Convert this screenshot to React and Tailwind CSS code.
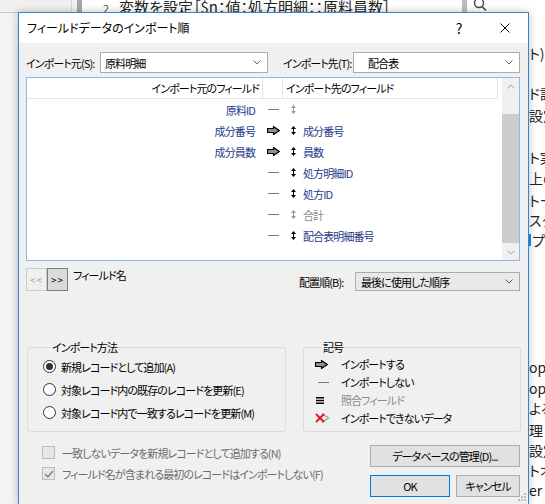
import React from "react";

// --- DATA ---
const fieldRows = [
  { src: "原料ID", mark: "dash", dim: true, dst: "" },
  { src: "成分番号", mark: "arrow", dim: false, dst: "成分番号" },
  { src: "成分員数", mark: "arrow", dim: false, dst: "員数" },
  { src: "", mark: "dash", dim: false, dst: "処方明細ID" },
  { src: "", mark: "dash", dim: false, dst: "処方ID" },
  { src: "", mark: "dash", dim: true, dst: "合計" },
  { src: "", mark: "dash", dim: false, dst: "配合表明細番号" },
];

const rightFragments = [
  { top: 45, text: "ト)" },
  { top: 85, text: "ド設" },
  { top: 107, text: "設定" },
  { top: 149, text: "ト実" },
  { top: 170, text: "上の" },
  { top: 192, text: "トー" },
  { top: 212, text: "スク" },
  { top: 232, text: "プト", mark: true },
  { top: 359, text: "op", hl: true },
  { top: 380, text: "op" },
  { top: 400, text: "よる" },
  { top: 422, text: "理" },
  { top: 442, text: "設定" },
  { top: 462, text: "トオ" },
  { top: 482, text: "er ス" },
];

// --- ICONS ---
const Chevron = ({ color = "#606060" }) => (
  <svg width="8" height="5" viewBox="0 0 8 5">
    <path d="M0.5 0.5L4 4L7.5 0.5" fill="none" stroke={color} strokeWidth="1" />
  </svg>
);

const ChevronUp = ({ color = "#a3a3a3" }) => (
  <svg width="8" height="5" viewBox="0 0 8 5">
    <path d="M0.5 4.5L4 1L7.5 4.5" fill="none" stroke={color} strokeWidth="1" />
  </svg>
);

const ImportArrow = () => (
  <svg width="13" height="9" viewBox="0 0 13 9">
    <path d="M0.5 2.5H6.5V0.5L12.2 4.5L6.5 8.5V6.5H0.5Z" fill="#8f8f8f" stroke="#000" strokeWidth="1.2" strokeLinejoin="miter" />
  </svg>
);

const UpDown = ({ color }) => (
  <svg width="5" height="9" viewBox="0 0 5 9">
    <path d="M2.5 0L5 3H0Z M2 3H3V6H2Z M0 6H5L2.5 9Z" fill={color} />
  </svg>
);

const Dash = () => <div className="w-[11px] h-px bg-[#7a7a7a]" />;

const MatchIcon = () => (
  <svg width="8" height="7" viewBox="0 0 8 7">
    <path d="M0 0.75H8M0 3.5H8M0 6.25H8" stroke="#000" strokeWidth="1.3" />
  </svg>
);

const CannotIcon = () => (
  <svg width="15" height="10" viewBox="0 0 15 10">
    <path d="M7 0.5L13.5 5L7 9.5" fill="none" stroke="#9a9a9a" strokeWidth="1.2" />
    <path d="M1 1L9 9M9 1L1 9" stroke="#e81123" strokeWidth="1.8" />
  </svg>
);

const Radio = ({ checked }) => (
  <div className="w-[13px] h-[13px] shrink-0 rounded-full border border-[#333] bg-white flex items-center justify-center">
    {checked && <div className="w-[7px] h-[7px] rounded-full bg-[#333]" />}
  </div>
);

const Checkbox = ({ checked }) => (
  <div className="w-[13px] h-[13px] shrink-0 border border-[#bcbcbc] bg-[#e6e6e6] flex items-center justify-center">
    {checked && (
      <svg width="10" height="8" viewBox="0 0 10 8">
        <path d="M1 4L3.8 6.8L9 1" fill="none" stroke="#8a8a8a" strokeWidth="1.6" />
      </svg>
    )}
  </div>
);

const Combo = ({ text, width, textPad, bg }) => (
  <div className={`flex items-center justify-between border border-[#acacac] h-full ${bg} ${width}`}>
    <span className={`${textPad} whitespace-nowrap text-black`}>{text}</span>
    <span className="pr-[6px] flex items-center"><Chevron /></span>
  </div>
);

export default function App() {
  return (
    <div className="relative w-[545px] h-[504px] overflow-hidden bg-white font-['Noto_Sans_CJK_JP','Noto_Sans',sans-serif] [font-feature-settings:'palt'] text-[11px] tracking-[-0.9px] leading-[16px] text-black">
      {/* --- BACKGROUND WINDOW --- */}
      <div className="flex h-[12px] overflow-hidden tracking-normal">
        <div className="w-[71px] bg-[#f0f0f0]" />
        <div className="w-[1px] bg-[#d4d4d4]" />
        <div className="w-[5px] bg-[#f0f0f0]" />
        <div className="w-[5px] bg-[#a6a6a6]" />
        <div className="w-[380px] bg-white flex items-start text-[15px] leading-[15px] text-[#222] -mt-[1px] whitespace-nowrap">
          <span className="ml-[21px] text-[11px] text-[#555] mt-[2px]">2</span>
          <span className="ml-[10px]">変数を設定［$n：値：処方明細：：原料員数］</span>
        </div>
        <div className="w-[5px] bg-[#bdbdbd]" />
        <div className="flex-1 bg-white pl-[6px]">
          <svg width="14" height="12" viewBox="0 0 14 12">
            <circle cx="6" cy="3" r="4.5" fill="none" stroke="#444" strokeWidth="1.4" />
            <path d="M9 6.5L13 10.5" stroke="#444" strokeWidth="1.6" />
          </svg>
        </div>
      </div>
      <div className="flex h-[492px]">
        <div className="w-[18px] border-t border-[#c8c8c8] bg-[#f3f3f3]" />
        <div className="w-[511px]" />
        <div className="relative flex-1 overflow-hidden bg-white text-[14px] leading-[16px] tracking-normal text-[#222]">
          {rightFragments.map((f, i) => (
            <div key={i} className="absolute left-[0px] whitespace-nowrap flex items-center" style={{ top: f.top - 12 }}>
              {f.mark && <span className="w-[2px] h-[12px] bg-[#2b88d8] mr-[1px]" />}
              <span>{f.text}</span>
              {f.hl && <span className="ml-[3px] w-[4px] h-[12px] bg-[#f5d000]" />}
            </div>
          ))}
        </div>
      </div>

      {/* --- DIALOG --- */}
      <div className="absolute left-[18px] top-[12px] w-[511px] h-[494px] border border-[#2b88d8] bg-[#f0f0f0] flex flex-col shadow-[0_0_8px_rgba(0,0,0,0.25)]">
        {/* Title bar */}
        <div className="h-[30px] bg-white flex items-center justify-between">
          <span className="pl-[8px] text-[12px] tracking-normal text-black">フィールドデータのインポート順</span>
          <div className="flex items-center">
            <div className="w-[46px] flex justify-center text-[14px] tracking-normal text-black">?</div>
            <div className="w-[46px] flex justify-center">
              <svg width="10" height="10" viewBox="0 0 10 10">
                <path d="M0.5 0.5L9.5 9.5M9.5 0.5L0.5 9.5" stroke="#000" strokeWidth="1" />
              </svg>
            </div>
          </div>
        </div>

        {/* Source / target */}
        <div className="flex items-center h-[21px] mt-[9px] pl-[7px] whitespace-nowrap">
          <span className="w-[74px]">インポート元(S):</span>
          <Combo text="原料明細" width="w-[168px]" textPad="pl-[4px]" bg="bg-white" />
          <span className="w-[70px] ml-[15px]">インポート先(T):</span>
          <Combo text="配合表" width="w-[167px]" textPad="pl-[14px]" bg="bg-white" />
        </div>

        {/* Field list */}
        <div className="ml-[7px] mt-[4px] w-[494px] h-[184px] border border-[#8cbbe8] bg-white flex">
          <div className="flex-1 flex flex-col">
            <div className="flex h-[21px]">
              <div className="w-[236px] flex items-center justify-end pr-[3px] border-r border-b border-[#e5e5e5]">インポート元のフィールド</div>
              <div className="w-[20px] border-r border-b border-[#e5e5e5]" />
              <div className="w-[215px] flex items-center pl-[3px] border-r border-b border-[#e5e5e5]">インポート先のフィールド</div>
            </div>
            {fieldRows.map((row, i) => (
              <div key={i} className="flex h-[21px] items-center">
                <div className="w-[236px] text-right pr-[8px] text-[#1f3a8a]">{row.src}</div>
                <div className="w-[20px] flex justify-center">
                  {row.mark === "arrow" ? <ImportArrow /> : <Dash />}
                </div>
                <div className="flex items-center pl-[8px]">
                  <UpDown color={row.dim ? "#9a9a9a" : "#000"} />
                  <span className={`ml-[7px] ${row.dim ? "text-[#8a8a8a]" : "text-[#1f3a8a]"}`}>{row.dst}</span>
                </div>
              </div>
            ))}
          </div>
          {/* Scrollbar */}
          <div className="w-[17px] bg-[#f0f0f0] flex flex-col">
            <div className="h-[17px] flex items-center justify-center"><ChevronUp /></div>
            <div className="h-[19px]" />
            <div className="h-[129px] bg-[#cdcdcd]" />
            <div className="flex-1" />
            <div className="h-[16px] flex items-center justify-center"><Chevron color="#a3a3a3" /></div>
          </div>
        </div>

        {/* Field name toggle / order */}
        <div className="flex items-start mt-[7px] pl-[7px] pr-[8px] whitespace-nowrap">
          <div className="flex h-[23px]">
            <div className="w-[21px] border border-[#cccccc] bg-[#f0f0f0] flex items-center justify-center text-[10px] text-[#a0a0a0] tracking-[1px]">&lt;&lt;</div>
            <div className="w-[21px] border border-[#7a7a7a] bg-[#dadada] flex items-center justify-center text-[10px] text-black tracking-[1px]">&gt;&gt;</div>
          </div>
          <span className="ml-[5px] -mt-[1px]">フィールド名</span>
          <div className="ml-auto flex items-center mt-[4px] h-[19px]">
            <span className="w-[56px]">配置順(B):</span>
            <Combo text="最後に使用した順序" width="w-[165px]" textPad="pl-[5px]" bg="bg-[#e9e9e9]" />
          </div>
        </div>

        {/* Group boxes */}
        <div className="flex mt-[48px] pl-[8px] pr-[7px] gap-[17px] whitespace-nowrap">
          <fieldset className="w-[259px] border border-[#dcdcdc] rounded-[3px] pl-[15px] pb-[5px]">
            <legend className="ml-[8px] px-[1px]">インポート方法</legend>
            {[
              { label: "新規レコードとして追加(A)", checked: true },
              { label: "対象レコード内の既存のレコードを更新(E)", checked: false },
              { label: "対象レコード内で一致するレコードを更新(M)", checked: false },
            ].map((r, i) => (
              <div key={i} className="flex items-center h-[23px]">
                <Radio checked={r.checked} />
                <span className="ml-[5px]">{r.label}</span>
              </div>
            ))}
          </fieldset>
          <fieldset className="flex-1 border border-[#dcdcdc] rounded-[3px] pl-[11px] pb-[4px]">
            <legend className="ml-[7px] px-[1px]">記号</legend>
            <div className="flex items-center h-[18px]">
              <div className="w-[26px] flex"><ImportArrow /></div>
              <span>インポートする</span>
            </div>
            <div className="flex items-center h-[18px]">
              <div className="w-[26px] flex pl-[3px]"><Dash /></div>
              <span>インポートしない</span>
            </div>
            <div className="flex items-center h-[18px]">
              <div className="w-[26px] flex pl-[1px]"><MatchIcon /></div>
              <span className="text-[#8a8a8a]">照合フィールド</span>
            </div>
            <div className="flex items-center h-[18px]">
              <div className="w-[26px] flex"><CannotIcon /></div>
              <span>インポートできないデータ</span>
            </div>
          </fieldset>
        </div>

        {/* Options and buttons */}
        <div className="flex items-start pl-[23px] pr-[8px]">
          <div className="flex-1 mt-[10px] text-[#6d6d6d] whitespace-nowrap">
            <div className="flex items-center h-[21px]">
              <Checkbox checked={false} />
              <span className="ml-[7px]">一致しないデータを新規レコードとして追加する(N)</span>
            </div>
            <div className="flex items-center h-[21px]">
              <Checkbox checked={true} />
              <span className="ml-[7px]">フィールド名が含まれる最初のレコードはインポートしない(F)</span>
            </div>
          </div>
          <div className="w-[150px] mt-[13px] flex flex-col">
            <button className="h-[22px] border border-[#adadad] bg-[#e1e1e1]">データベースの管理(D)...</button>
            <div className="flex mt-[8px] gap-[6px]">
              <button className="w-[80px] h-[22px] border border-[#0078d7] bg-[#e1e1e1]">OK</button>
              <button className="flex-1 h-[22px] border border-[#adadad] bg-[#e1e1e1]">キャンセル</button>
            </div>
          </div>
        </div>

        {/* Resize grip */}
        <svg className="absolute right-[1px] bottom-[1px]" width="11" height="11" viewBox="0 0 11 11">
          <rect x="8" y="0" width="2" height="2" fill="#bcbcbc" />
          <rect x="5" y="3" width="2" height="2" fill="#bcbcbc" />
          <rect x="8" y="3" width="2" height="2" fill="#bcbcbc" />
          <rect x="2" y="6" width="2" height="2" fill="#bcbcbc" />
          <rect x="5" y="6" width="2" height="2" fill="#bcbcbc" />
          <rect x="8" y="6" width="2" height="2" fill="#bcbcbc" />
        </svg>
      </div>
    </div>
  );
}
